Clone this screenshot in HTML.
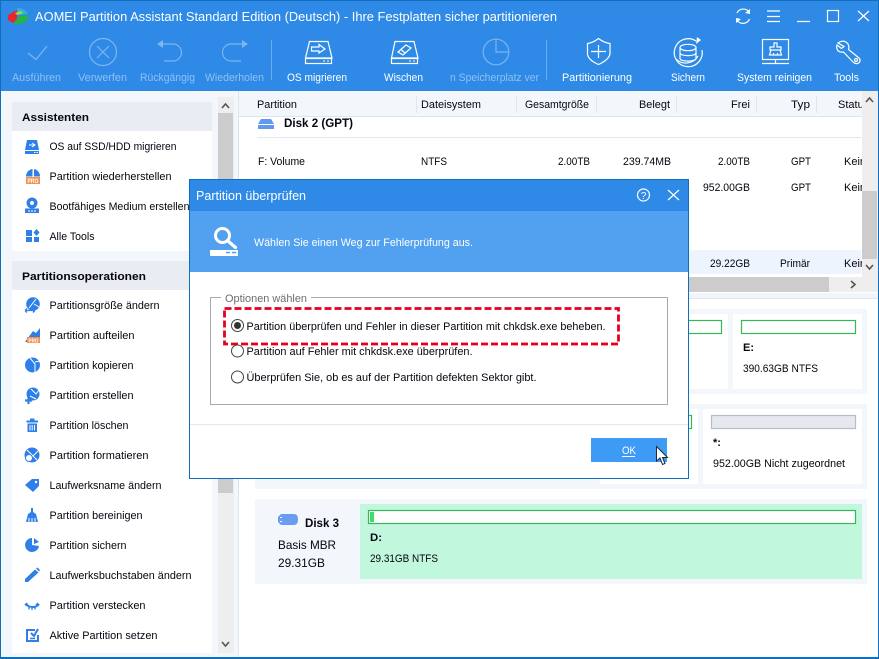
<!DOCTYPE html>
<html lang="de">
<head>
<meta charset="utf-8">
<title>AOMEI Partition Assistant</title>
<style>
html,body{margin:0;padding:0;background:#fff;width:879px;height:659px;overflow:hidden}
svg{display:block;font-family:"Liberation Sans",sans-serif;font-size:11px;fill:#05060f}
.w{fill:#fff}
.d{fill:#8fc1f2}
.b{font-weight:bold}
.l{fill:none;stroke:#fff;stroke-width:1.2}
.g{fill:none;stroke:#7fb5ee;stroke-width:1.2}
.i{fill:#2f7fe8}
</style>
</head>
<body>
<svg width="879" height="659" viewBox="0 0 879 659" xmlns="http://www.w3.org/2000/svg">
<!-- window -->
<rect width="879" height="659" fill="#0f6fbd"/>
<rect x="1" y="1" width="877" height="90.500" fill="#2e8ae6"/>
<rect x="1" y="91" width="237" height="566" fill="#f3f6fb"/>
<rect x="239" y="91" width="639" height="566" fill="#fff"/>
<rect x="238" y="91" width="1" height="566" fill="#dfe4ec"/>

<!-- logo + title -->
<path d="M8 15 L17 10 L17 19 L13 23 L8 20Z" fill="#e5262b"/>
<path d="M17 8 Q25 8 28 14 L18 15Z" fill="#2fb4d8"/>
<path d="M14 23 L19 16 L28 15 L28 20 Q23 25 14 24Z" fill="#28b04a"/>
<path d="M15 13 L21 11 L23 13 L17 15Z" fill="#a6d93a"/>
<text class="w" x="35" y="21" font-size="13" textLength="522" lengthAdjust="spacingAndGlyphs">AOMEI Partition Assistant Standard Edition (Deutsch) - Ihre Festplatten sicher partitionieren</text>

<!-- window controls -->
<path class="l" d="M749 12 A7 7 0 0 0 737 13 M737 20 A7 7 0 0 0 749.500 19"/>
<path class="w" d="M750 9 L750 14 L745 13Z M736 23 L736 18 L741 19Z"/>
<path class="l" d="M767 11H780M767 16.500H780M767 21.500H780M797 21.500H810"/>
<rect class="l" x="827.500" y="10.500" width="11" height="11"/>
<path class="l" d="M858 11 L869 21 M869 11 L858 21"/>

<!-- toolbar: disabled icons -->
<path class="g" d="M28 53 L36 59.500 L47 46"/>
<circle class="g" cx="103" cy="52" r="13.500"/>
<path class="g" d="M97 46 L109 58 M109 46 L97 58"/>
<path class="g" d="M160 44 H173 A8.500 8.500 0 0 1 173 61 H164"/>
<path d="M157 44 L163 40 V48Z" fill="#7fb5ee"/>
<path class="g" d="M245 44 H231 A8.500 8.500 0 0 0 231 61 H241"/>
<path d="M248 44 L242 40 V48Z" fill="#7fb5ee"/>
<circle class="g" cx="496" cy="52" r="12.800"/>
<path class="g" d="M496 39 V52 H509"/>
<path d="M271.500 40V80M546.500 40V80" stroke="#72adeb" stroke-width="1" fill="none"/>

<!-- OS migrieren icon -->
<path class="l" d="M309.500 41.500 H328 L332 58 H305.500Z"/>
<rect class="l" x="305.500" y="58.500" width="26" height="5"/>
<path class="l" d="M311.500 47 H319 V44.500 L325 49 L319 53 V51 H311.500Z"/>
<path d="M323 61H325M327 61H329" stroke="#fff"/>
<!-- Wischen icon -->
<path class="l" d="M395 41.500 H414 L418 58 H391.500Z"/>
<rect class="l" x="391.500" y="58.500" width="26" height="5"/>
<path class="l" d="M398 52 L406 45 L411 48 L403 55Z M401 49.500 L405 53"/>
<path d="M409 61H411M413 61H415" stroke="#fff"/>
<!-- shield -->
<path class="l" d="M598.500 38.500 C594 42 591 43 587.500 43.500 V54 C588 59 593 62 598.500 64.500 C604 62 609 59 610 54 V43.500 C606 43 603 42 598.500 38.500Z"/>
<path class="l" d="M598.500 45V58M591 51.500H606"/>
<!-- Sichern -->
<path class="l" d="M696 41 A14 14 0 1 0 702 50"/>
<path class="w" d="M701 40 L697 37 L696 44Z"/>
<path class="l" d="M698 56 A14 14 0 0 1 676 59"/>
<ellipse class="l" cx="688" cy="47.500" rx="8" ry="3.200"/>
<path class="l" d="M680 47.500V58.500C680 62 696 62 696 58.500V47.500M680 53C680 56.500 696 56.500 696 53"/>
<!-- System reinigen -->
<rect class="l" x="762.500" y="39.500" width="26" height="20"/>
<path class="l" d="M762 63.500H789M775.500 60V63"/>
<path class="l" d="M774 43H777V47H781V50H770V47H774Z M771 50 L769.500 55 H781.500 L780 50 M773.500 53V55M777.500 53V55"/>
<!-- Tools -->
<path class="l" d="M838 43 C842 40 846 41 848 44 C849 46 849 48 848.500 49.500 L859 58 C861 60 860 63 857.500 63.500 C855.500 64 854 63 853 62 L843.500 52 C840.500 52.500 838 51.500 837 49 C836.500 47.500 836.500 46 837 45 L841.500 48.500 L844 46.500Z"/>
<circle class="l" cx="856" cy="60" r="1.500"/>

<!-- toolbar labels -->
<text class="d" x="12" y="81" textLength="49" lengthAdjust="spacingAndGlyphs">Ausführen</text>
<text class="d" x="78" y="81" textLength="49" lengthAdjust="spacingAndGlyphs">Verwerfen</text>
<text class="d" x="140" y="81" textLength="55" lengthAdjust="spacingAndGlyphs">Rückgängig</text>
<text class="d" x="205" y="81" textLength="59" lengthAdjust="spacingAndGlyphs">Wiederholen</text>
<text class="w" x="287" y="81" textLength="60" lengthAdjust="spacingAndGlyphs">OS migrieren</text>
<text class="w" x="384" y="81" textLength="39" lengthAdjust="spacingAndGlyphs">Wischen</text>
<text class="d" x="450" y="81" textLength="89" lengthAdjust="spacingAndGlyphs">n Speicherplatz ver</text>
<text class="w" x="562" y="81" textLength="70" lengthAdjust="spacingAndGlyphs">Partitionierung</text>
<text class="w" x="671" y="81" textLength="34" lengthAdjust="spacingAndGlyphs">Sichern</text>
<text class="w" x="737" y="81" textLength="75" lengthAdjust="spacingAndGlyphs">System reinigen</text>
<text class="w" x="834" y="81" textLength="25" lengthAdjust="spacingAndGlyphs">Tools</text>

<!-- left cards -->
<rect x="12" y="102" width="200" height="149" fill="#fff"/>
<rect x="12" y="102" width="200" height="29" fill="#e9edf3"/>
<rect x="12" y="261" width="200" height="392" fill="#fff"/>
<rect x="12" y="261" width="200" height="29" fill="#e9edf3"/>
<text class="b" x="22" y="121" textLength="67" lengthAdjust="spacingAndGlyphs">Assistenten</text>
<text class="b" x="22" y="280" textLength="124" lengthAdjust="spacingAndGlyphs">Partitionsoperationen</text>

<text x="49.500" y="150" textLength="127" lengthAdjust="spacingAndGlyphs">OS auf SSD/HDD migrieren</text>
<text x="49.500" y="180" textLength="122" lengthAdjust="spacingAndGlyphs">Partition wiederherstellen</text>
<text x="49.500" y="210" textLength="140" lengthAdjust="spacingAndGlyphs">Bootfähiges Medium erstellen</text>
<text x="49.500" y="240" textLength="45" lengthAdjust="spacingAndGlyphs">Alle Tools</text>
<text x="49.500" y="309" textLength="110" lengthAdjust="spacingAndGlyphs">Partitionsgröße ändern</text>
<text x="49.500" y="339" textLength="85" lengthAdjust="spacingAndGlyphs">Partition aufteilen</text>
<text x="49.500" y="369" textLength="84" lengthAdjust="spacingAndGlyphs">Partition kopieren</text>
<text x="49.500" y="399" textLength="84" lengthAdjust="spacingAndGlyphs">Partition erstellen</text>
<text x="49.500" y="429" textLength="79" lengthAdjust="spacingAndGlyphs">Partition löschen</text>
<text x="49.500" y="459" textLength="99" lengthAdjust="spacingAndGlyphs">Partition formatieren</text>
<text x="49.500" y="489" textLength="112" lengthAdjust="spacingAndGlyphs">Laufwerksname ändern</text>
<text x="49.500" y="519" textLength="93" lengthAdjust="spacingAndGlyphs">Partition bereinigen</text>
<text x="49.500" y="549" textLength="77" lengthAdjust="spacingAndGlyphs">Partition sichern</text>
<text x="49.500" y="579" textLength="142" lengthAdjust="spacingAndGlyphs">Laufwerksbuchstaben ändern</text>
<text x="49.500" y="609" textLength="96" lengthAdjust="spacingAndGlyphs">Partition verstecken</text>
<text x="49.500" y="639" textLength="108" lengthAdjust="spacingAndGlyphs">Aktive Partition setzen</text>

<!-- left icons -->
<path class="i" d="M27 140 H37 L39 150 H25Z"/>
<path d="M29 145H34M32 143L35 145L32 147" stroke="#fff" fill="none"/>
<rect class="i" x="25" y="151" width="14" height="3"/>
<path d="M34 152.500H35.500M36.500 152.500H38" stroke="#fff"/>

<path class="i" d="M26 176.500 A7.500 7.500 0 0 1 32.500 169 V176.500Z M34 169 A7.500 7.500 0 0 1 40 176.500 H34Z"/>
<rect x="26" y="177" width="14" height="7" fill="#f0924a"/>
<text x="27.500" y="183" font-size="6" font-weight="bold" fill="#fff" textLength="11" lengthAdjust="spacingAndGlyphs">PRO</text>

<circle class="i" cx="32" cy="203" r="5.500"/><circle cx="32" cy="203" r="2" fill="#fff"/>
<path class="i" d="M25 208.500 H39 V213 H25Z"/>
<path d="M28 211H30M31 211H33M34 211H36" stroke="#fff"/>

<path class="i" d="M26 230 H32 V236 H26Z M26 237 H32 V242 H26Z M34 237 H39 V242 H34Z M36.500 229 L39.500 232.500 L36.500 236 L33.500 232.500Z"/>

<circle class="i" cx="33" cy="304" r="6.800"/>
<path d="M29 308 L36 299 M34 304 L39 307" stroke="#fff" fill="none"/>
<path d="M25 310.500 H35 M25 310.500 L27 308.500 M25 310.500 L27 312.500 M35 310.500 L33 308.500 M35 310.500 L33 312.500" stroke="#2f7fe8" stroke-width="1.300" fill="none"/>

<path class="i" d="M25 342 L33 331 L36 333 L40 328 V337 H33 V342Z"/>
<rect x="27" y="337" width="13" height="6" fill="#f0924a"/>
<text x="28.500" y="342.300" font-size="5.500" font-weight="bold" fill="#fff" textLength="10" lengthAdjust="spacingAndGlyphs">PRO</text>

<circle class="i" cx="32.500" cy="365" r="7.500"/>
<path d="M30 358 L35 364 V373 M35 362 L40 361" stroke="#fff" fill="none"/>

<circle class="i" cx="33" cy="394" r="6.500"/>
<path d="M31 389 L36 394 L39 390 M30 396 L36 399" stroke="#fff" fill="none"/>
<path d="M25 400.500 H32 M28.500 397 V404" stroke="#2f7fe8" stroke-width="2.200"/>

<path class="i" d="M26.500 420.500 H38 V422.500 H26.500Z M30 418.500 H34.500 V420.500 H30Z M27.500 423.500 H37 V432 H27.500Z"/>
<path d="M30 425V430.500M32.200 425V430.500M34.500 425V430.500" stroke="#fff"/>

<circle class="i" cx="32" cy="455" r="7.500"/>
<path d="M27 450 L37 460M30 459 L38 451" stroke="#fff" fill="none"/>
<circle cx="29" cy="458" r="3.500" fill="#fff" stroke="#2f7fe8"/>

<path class="i" d="M25 485 L32 479 H39 V486 L33 492Z"/>
<circle cx="36" cy="482" r="1.200" fill="#fff"/>

<path class="i" d="M31 508 H33 V512 L36 514 L38 522 H26 L28 514 L31 512Z"/>
<path d="M29 518V522M32 518V522M35 518V522" stroke="#fff"/>

<path class="i" d="M32 538 A7 7 0 1 0 39 546 L32 545Z M34 538 L39 542 L34 544Z"/>
<path class="i" d="M25 579 L35 569.500 L38.500 572.500 L28 582 H25Z M36 568.500 L37.500 567.500 L40 570 L39 571.500Z"/>

<path d="M25 604 C30 608 36 608 39 604" stroke="#2f7fe8" stroke-width="2" fill="none"/>
<path d="M26 603 L28 605M29 607V609.500M32 608V610M35 607V609.500M38 603 L36 605" stroke="#2f7fe8" stroke-width="1.300"/>

<path d="M35 630 H27 V641 H38 V635" stroke="#2f7fe8" stroke-width="2" fill="none"/>
<path d="M31 633 L34 636 L38 629" stroke="#2f7fe8" stroke-width="2" fill="none"/>
<path d="M30 638.500H35" stroke="#2f7fe8" stroke-width="1.500"/>

<!-- left scrollbar -->
<rect x="218" y="97" width="16" height="556" fill="#eeeeee"/>
<rect x="218" y="113" width="15" height="380" fill="#cccccc"/>
<path d="M222 108 L225.500 104 L229 108" stroke="#555" stroke-width="1.600" fill="none"/>
<path d="M222 642 L225.500 646 L229 642" stroke="#555" stroke-width="1.600" fill="none"/>

<!-- table rows -->
<rect x="239" y="250" width="622" height="24" fill="#edf4fd"/>
<path d="M257 137.500H861" stroke="#e3e8ee"/>
<text class="b" x="284" y="127" font-size="12" textLength="69" lengthAdjust="spacingAndGlyphs">Disk 2 (GPT)</text>
<path d="M261 119 H271 L274 124 H258Z" fill="#5f9aee"/>
<rect x="258" y="125" width="16" height="4" fill="#5f9aee"/>
<text x="258" y="165" textLength="47" lengthAdjust="spacingAndGlyphs">F: Volume</text>
<text x="421" y="165" textLength="26" lengthAdjust="spacingAndGlyphs">NTFS</text>
<text x="558" y="165" textLength="32" lengthAdjust="spacingAndGlyphs">2.00TB</text>
<text x="623" y="165" textLength="48" lengthAdjust="spacingAndGlyphs">239.74MB</text>
<text x="718" y="165" textLength="32" lengthAdjust="spacingAndGlyphs">2.00TB</text>
<text x="791" y="165" textLength="20" lengthAdjust="spacingAndGlyphs">GPT</text>
<text x="844" y="165">Keine</text>
<text x="703" y="191" textLength="47" lengthAdjust="spacingAndGlyphs">952.00GB</text>
<text x="791" y="191" textLength="20" lengthAdjust="spacingAndGlyphs">GPT</text>
<text x="844" y="191">Keine</text>
<text x="710" y="267" textLength="40" lengthAdjust="spacingAndGlyphs">29.22GB</text>
<text x="780" y="267" textLength="30" lengthAdjust="spacingAndGlyphs">Primär</text>
<text x="844" y="267">Keine</text>

<!-- table header -->
<rect x="239" y="91" width="623" height="25" fill="#f3f6fb"/>
<path d="M239 116.500H862" stroke="#dbe4f0"/>
<path d="M416.500 96V113M516.500 96V113M596.500 96V113M676.500 96V113M756.500 96V113M816.500 96V113" stroke="#e2e6ec"/>
<text x="257" y="108" textLength="40" lengthAdjust="spacingAndGlyphs">Partition</text>
<text x="421" y="108" textLength="60" lengthAdjust="spacingAndGlyphs">Dateisystem</text>
<text x="525" y="108" textLength="64" lengthAdjust="spacingAndGlyphs">Gesamtgröße</text>
<text x="639" y="108" textLength="31" lengthAdjust="spacingAndGlyphs">Belegt</text>
<text x="731" y="108" textLength="19" lengthAdjust="spacingAndGlyphs">Frei</text>
<text x="791" y="108" textLength="19" lengthAdjust="spacingAndGlyphs">Typ</text>
<text x="838" y="108">Status</text>

<!-- table scrollbars -->
<rect x="862" y="91" width="16" height="186" fill="#eeeeee"/>
<rect x="862" y="191" width="15" height="68" fill="#cccccc"/>
<path d="M866 102 L869.500 98 L873 102" stroke="#555" stroke-width="1.600" fill="none"/>
<path d="M866 265 L869.500 269 L873 265" stroke="#555" stroke-width="1.600" fill="none"/>
<rect x="239" y="277" width="639" height="15" fill="#eeeeee"/>
<rect x="239" y="277" width="590" height="15" fill="#cccccc"/>
<path d="M851 281 L855 284.500 L851 288" stroke="#555" stroke-width="1.600" fill="none"/>
<rect x="239" y="293" width="639" height="5" fill="#f1f4f9"/>
<path d="M239 298.500H878" stroke="#dfe6ef"/>

<!-- disk panels -->
<rect x="255" y="309" width="612" height="85" fill="#f3f6fb"/>
<rect x="600" y="314" width="128" height="75" fill="#fff"/>
<rect x="733" y="314" width="129" height="75" fill="#fff"/>
<rect x="600" y="320.500" width="121.500" height="13" fill="#fff" stroke="#35b85a" stroke-width="1.200"/>
<rect x="741.500" y="320.500" width="114" height="13" fill="#fff" stroke="#35b85a" stroke-width="1.200"/>
<text class="b" x="743" y="351">E:</text>
<text x="743" y="372" textLength="75" lengthAdjust="spacingAndGlyphs">390.63GB NTFS</text>

<rect x="255" y="404" width="612" height="85" fill="#f3f6fb"/>
<rect x="600" y="409" width="98" height="75" fill="#fff"/>
<rect x="703" y="409" width="159" height="75" fill="#fff"/>
<rect x="600" y="415.500" width="91.500" height="13" fill="#fff" stroke="#35b85a" stroke-width="1.200"/>
<rect x="711.500" y="415.500" width="144" height="13" fill="#e6e8ef" stroke="#b9bcc5" stroke-width="1.200"/>
<text class="b" x="713" y="446">*:</text>
<text x="713" y="467" textLength="132" lengthAdjust="spacingAndGlyphs">952.00GB Nicht zugeordnet</text>

<rect x="255" y="499" width="612" height="85" fill="#f3f6fb"/>
<rect x="360" y="504" width="502" height="75" fill="#c1f7dd"/>
<rect x="368.500" y="510.500" width="487" height="13" fill="#fff" stroke="#35b85a" stroke-width="1.200"/>
<rect x="370" y="512" width="4" height="10" fill="#3fdc70"/>
<text class="b" x="370" y="541" textLength="12" lengthAdjust="spacingAndGlyphs">D:</text>
<text x="370" y="562" textLength="68" lengthAdjust="spacingAndGlyphs">29.31GB NTFS</text>
<path d="M278 517 L281 514 H294 Q298 514 298 519.500 Q298 525 294 525 H281 L278 522Z" fill="#6a9cf0"/>
<path d="M280 517.500H282M280 521.500H282" stroke="#fff"/>
<text class="b" x="305" y="527" textLength="34" font-size="11.500" lengthAdjust="spacingAndGlyphs">Disk 3</text>
<text x="278" y="549" font-size="12" textLength="58" lengthAdjust="spacingAndGlyphs">Basis MBR</text>
<text x="278" y="567" font-size="12" textLength="47" lengthAdjust="spacingAndGlyphs">29.31GB</text>

<!-- dialog -->
<rect x="189.500" y="179.500" width="499" height="299" fill="#fff" stroke="#0f6fbd"/>
<rect x="190" y="180" width="498" height="31" fill="#2e8ae6"/>
<rect x="190" y="211" width="498" height="61" fill="#52a0f0"/>
<text class="w" x="196" y="200" font-size="12.500" textLength="110" lengthAdjust="spacingAndGlyphs">Partition überprüfen</text>
<circle class="l" cx="643.500" cy="195" r="6"/>
<text class="w" x="643.500" y="199" font-size="10" text-anchor="middle">?</text>
<path class="l" d="M668 190 L679 200 M679 190 L668 200"/>
<circle cx="222.500" cy="235.500" r="7" fill="none" stroke="#fff" stroke-width="3"/>
<path d="M228 241 L235.500 247.500" stroke="#fff" stroke-width="3.200" stroke-linecap="round"/>
<rect class="w" x="210" y="250" width="28" height="6"/>
<path d="M226 252.500H230M232 252.500H236" stroke="#52a0f0" stroke-width="1.500"/>
<text class="w" x="254" y="246" textLength="219" lengthAdjust="spacingAndGlyphs">Wählen Sie einen Weg zur Fehlerprüfung aus.</text>

<rect x="210.500" y="297.500" width="457" height="107" fill="none" stroke="#a9a9a9"/>
<rect x="221" y="294" width="90" height="8" fill="#fff"/>
<text x="225" y="302" textLength="82" lengthAdjust="spacingAndGlyphs" style="fill:#6d6d6d">Optionen wählen</text>
<rect x="224.500" y="308.500" width="394" height="35.500" fill="none" stroke="#e60020" stroke-width="2.800" stroke-dasharray="7 3"/>

<circle cx="237.500" cy="325.500" r="6" fill="#fff" stroke="#444"/>
<circle cx="237.500" cy="325.500" r="3.500" fill="#333"/>
<text x="246.500" y="330" textLength="359" lengthAdjust="spacingAndGlyphs">Partition überprüfen und Fehler in dieser Partition mit chkdsk.exe beheben.</text>
<circle cx="237.500" cy="351" r="6" fill="#fff" stroke="#444"/>
<text x="246.500" y="355" textLength="226" lengthAdjust="spacingAndGlyphs">Partition auf Fehler mit chkdsk.exe überprüfen.</text>
<circle cx="237.500" cy="377" r="6" fill="#fff" stroke="#444"/>
<text x="246.500" y="381" textLength="290" lengthAdjust="spacingAndGlyphs">Überprüfen Sie, ob es auf der Partition defekten Sektor gibt.</text>

<path d="M190 424.500H688" stroke="#e6e8ee"/>
<rect x="591" y="438" width="76" height="24" fill="#3d9bf5"/>
<text class="w" x="622" y="454" textLength="14" lengthAdjust="spacingAndGlyphs">OK</text>
<path d="M622 456.500H635" stroke="#fff"/>
<path d="M656.500 446.500 V461 L660 458 L662.500 464.500 L665 463.500 L662.500 457.500 L667.500 457.500Z" fill="#fff" stroke="#1a2a40" stroke-width="1"/>
</svg>
</body>
</html>
